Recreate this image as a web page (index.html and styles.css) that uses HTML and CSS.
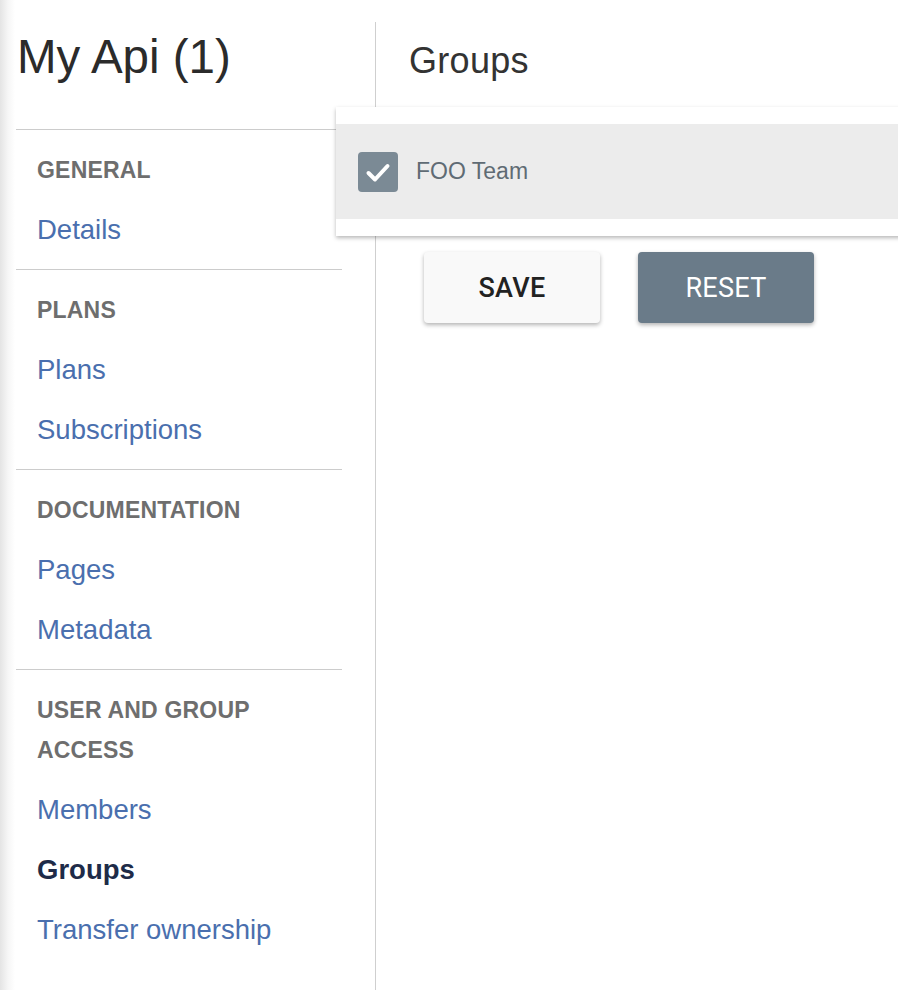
FILE: index.html
```html
<!DOCTYPE html>
<html>
<head>
<meta charset="utf-8">
<link rel="stylesheet" href="styles.css">
</head>
<body>
<div class="layout">
  <aside class="sidebar">
    <h1 class="title">My Api (1)</h1>
    <section class="nav-section">
      <div class="nav-header">GENERAL</div>
      <a class="nav-link">Details</a>
    </section>
    <section class="nav-section">
      <div class="nav-header">PLANS</div>
      <a class="nav-link">Plans</a>
      <a class="nav-link">Subscriptions</a>
    </section>
    <section class="nav-section">
      <div class="nav-header">DOCUMENTATION</div>
      <a class="nav-link">Pages</a>
      <a class="nav-link">Metadata</a>
    </section>
    <section class="nav-section">
      <div class="nav-header">USER AND GROUP ACCESS</div>
      <a class="nav-link">Members</a>
      <a class="nav-link active">Groups</a>
      <a class="nav-link">Transfer ownership</a>
    </section>
  </aside>
  <main class="main">
    <h2 class="page-title">Groups</h2>
    <div class="card">
      <div class="group-row">
        <span class="checkbox">
          <svg viewBox="0 0 40 40" width="40" height="40"><path d="M10.5 21 L17 27.5 L29.5 14" fill="none" stroke="#fff" stroke-width="4" stroke-linecap="round" stroke-linejoin="round"/></svg>
        </span>
        <span class="group-name">FOO Team</span>
      </div>
    </div>
    <div class="actions">
      <button class="btn btn-save">SAVE</button>
      <button class="btn btn-reset">RESET</button>
    </div>
  </main>
</div>
</body>
</html>
```

FILE: styles.css
```css
html, body {
  margin: 0;
  padding: 0;
  height: 100%;
}
body {
  font-family: "Liberation Sans", Arial, Helvetica, sans-serif;
  background: linear-gradient(to right, #e4e4e4 0px, #f6f6f6 8px, #ffffff 15px) no-repeat;
  background-size: 15px 100%;
  background-color: #fff;
  overflow: hidden;
}
.layout {
  display: flex;
  min-height: 100vh;
}
.sidebar {
  box-sizing: border-box;
  width: 376px;
  flex: 0 0 376px;
  margin-top: 22px;
  padding: 7px 33px 0 16px;
  border-right: 1px solid #cfcfcf;
  min-height: calc(100vh - 22px);
}
.title {
  margin: 0 0 44px 1px;
  font-size: 47.5px;
  line-height: 56px;
  font-weight: normal;
  color: #2b2b2b;
}
.nav-section {
  border-top: 1px solid #cccccc;
  padding: 20px 0 0 21px;
  display: flex;
  flex-direction: column;
}
.nav-header {
  font-size: 23px;
  letter-spacing: 0.2px;
  line-height: 40px;
  font-weight: bold;
  color: #6e6e6e;
  margin-bottom: 20px;
}
.nav-link {
  font-size: 27.5px;
  line-height: 40px;
  color: #4a6fae;
  margin-bottom: 20px;
  text-decoration: none;
}
.nav-link:last-child {
  margin-bottom: 19px;
}
.nav-link.active {
  color: #1e2b48;
  font-weight: bold;
}
.main {
  flex: 1;
  min-width: 0;
}
.page-title {
  margin: 41px 0 0 33px;
  font-size: 36px;
  letter-spacing: 0.3px;
  line-height: 40px;
  font-weight: normal;
  color: #333;
}
.card {
  margin: 26px -60px 0 -40px;
  padding: 17px 0;
  background: #fff;
  box-shadow: 0 2px 4px rgba(0, 0, 0, 0.28);
  position: relative;
}
.group-row {
  background: #ececec;
  height: 95px;
  display: flex;
  align-items: center;
  padding-left: 22px;
  gap: 18px;
}
.checkbox {
  width: 40px;
  height: 40px;
  border-radius: 4px;
  background: #7b8a95;
  display: flex;
}
.group-name {
  font-size: 23px;
  color: #5f6b74;
}
.actions {
  display: flex;
  gap: 38px;
  margin: 16px 0 0 48px;
}
.btn {
  width: 176px;
  height: 71px;
  border: none;
  border-radius: 4px;
  font-family: Roboto, "Liberation Sans", Arial, sans-serif;
  font-size: 27px;
  font-weight: 500;
  letter-spacing: 0.3px;
  box-shadow: 0 2px 4px rgba(0, 0, 0, 0.3);
  padding: 0;
}
.btn-save {
  background: #f9f9f9;
  color: #222;
}
.btn-reset {
  background: #6a7b89;
  color: #fff;
  font-weight: 400;
}
```
